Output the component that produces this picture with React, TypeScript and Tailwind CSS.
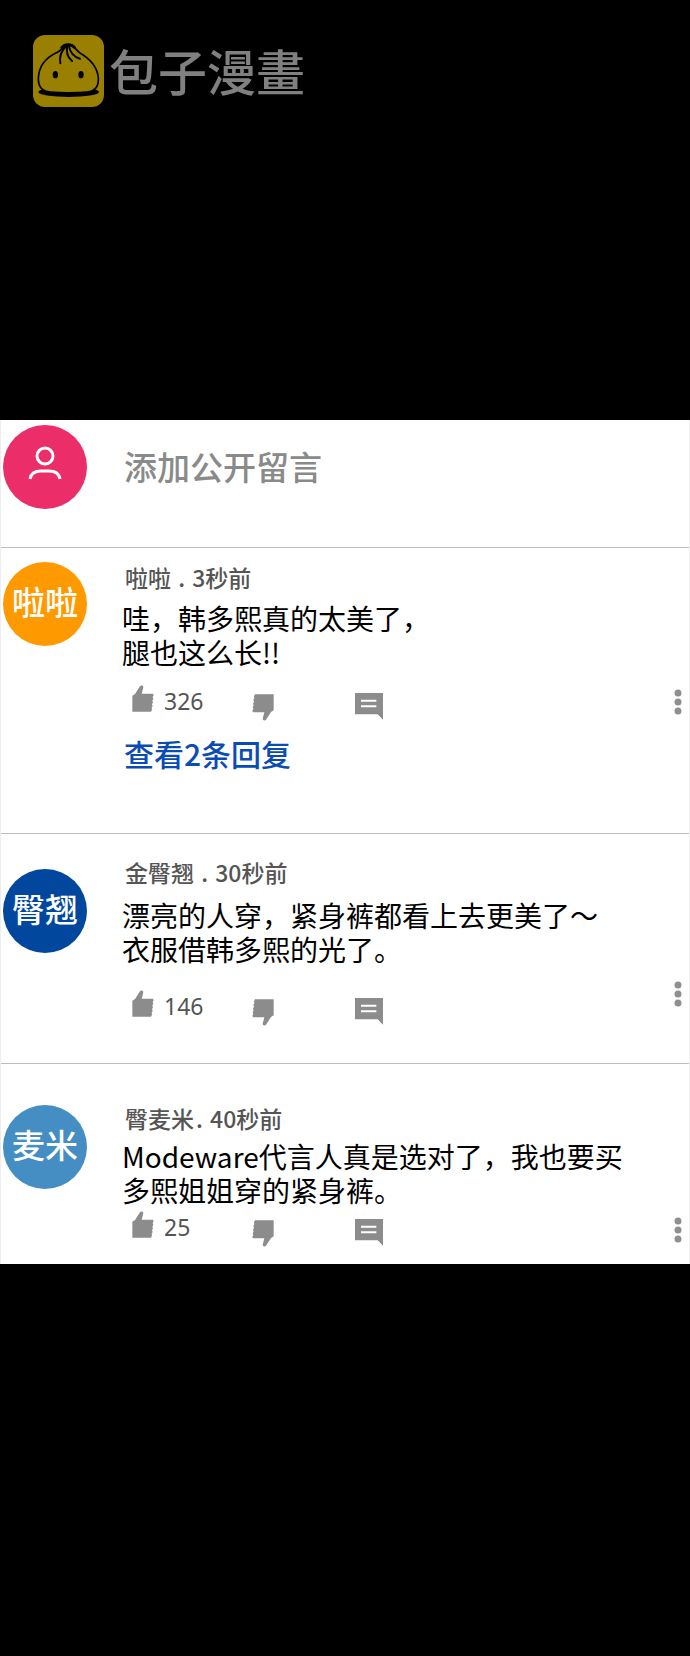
import React from "react";
import clsx from "clsx";

type Comment = {
  id: string;
  initials: string;
  avatar: string;
  name: string;
  separator: string;
  time: string;
  body: string;
  likes: number;
  replies?: string;
  spacing: {
    avatar: string;
    content: string;
    body: string;
    actions: string;
    more: string;
  };
};

const comments: Comment[] = [
  {
    id: "lala",
    initials: "啦啦",
    avatar: "bg-[#ff9900]",
    name: "啦啦",
    separator: " . ",
    time: "3秒前",
    body: "哇，韩多熙真的太美了，\n腿也这么长!!",
    likes: 326,
    replies: "查看2条回复",
    spacing: {
      avatar: "pt-[14px]",
      content: "pt-[15px] pb-[62px]",
      body: "mt-[10px]",
      actions: "mt-[16px]",
      more: "pt-[141px]",
    },
  },
  {
    id: "tunqiao",
    initials: "臀翘",
    avatar: "bg-[#00479d]",
    name: "金臀翘",
    separator: " . ",
    time: "30秒前",
    body: "漂亮的人穿，紧身裤都看上去更美了～\n衣服借韩多熙的光了。",
    likes: 146,
    spacing: {
      avatar: "pt-[35px]",
      content: "pt-[24px] pb-[37px]",
      body: "mt-[12px]",
      actions: "mt-[24px]",
      more: "pt-[147px]",
    },
  },
  {
    id: "maimi",
    initials: "麦米",
    avatar: "bg-[#448ec4]",
    name: "臀麦米",
    separator: ". ",
    time: "40秒前",
    body: "Modeware代言人真是选对了，我也要买\n多熙姐姐穿的紧身裤。",
    likes: 25,
    spacing: {
      avatar: "pt-[41px]",
      content: "pt-[40px] pb-[17px]",
      body: "mt-[7px]",
      actions: "mt-[4px]",
      more: "pt-[153px]",
    },
  },
];

function BaoziLogo() {
  return (
    <svg className="w-[71px] h-[72px] shrink-0" viewBox="0 0 213 216" fill="none" aria-hidden="true">
      <rect width="213" height="216" rx="36" fill="#998000" />
      <ellipse cx="107" cy="171" rx="91" ry="15" fill="#000" />
      <path
        d="M106 29C92 30 88 44 73 52C45 65 17 88 16 131C16 155 27 169 52 171C90 174 124 174 162 171C186 169 197 153 196 130C194 93 168 70 141 54C128 45 124 30 106 29Z"
        fill="#998000"
        stroke="#000"
        strokeWidth="5"
      />
      <path
        d="M86 38C96 26 115 26 125 38"
        stroke="#000"
        strokeWidth="8"
        strokeLinecap="round"
      />
      <path
        d="M100 33C86 46 78 64 82 85M103 33C99 51 104 67 117 78M108 33C110 50 122 66 141 71"
        stroke="#000"
        strokeWidth="6"
        strokeLinecap="round"
      />
      <ellipse cx="67" cy="119" rx="8" ry="11" fill="#000" />
      <ellipse cx="144" cy="119" rx="8" ry="11" fill="#000" />
    </svg>
  );
}

function PersonIcon() {
  return (
    <svg className="w-[34px] h-[36px]" viewBox="0 0 34 36" fill="none" stroke="#fff" strokeWidth="3" aria-hidden="true">
      <circle cx="17" cy="10" r="8" />
      <path d="M2 33C3 27 7 25 13 25H21C27 25 31 27 32 33" />
    </svg>
  );
}

function ThumbIcon({ className }: { className?: string }) {
  return (
    <svg className={clsx("w-[22px] h-[27px]", className)} viewBox="0 0 66 81" fill="#8c8c8c" aria-hidden="true">
      <path d="M1 32L9 27L24 4C27 0 34 2 34 7L29 26H63L65 31L62 36L64 41L61 47L63 52L60 58L62 63L59 68L60 74L57 80H1Z" />
    </svg>
  );
}

function ReplyIcon() {
  return (
    <svg className="w-[28px] h-[27px]" viewBox="0 0 84 81" aria-hidden="true">
      <path d="M0 0H84V80L68 64H0Z" fill="#8c8c8c" />
      <path d="M18 23H64M18 40H64" stroke="#fff" strokeWidth="6" />
    </svg>
  );
}

function Avatar({ className, children }: { className: string; children: React.ReactNode }) {
  return (
    <div
      className={clsx(
        "w-[84px] h-[84px] pb-[6px] rounded-full shrink-0 flex items-center justify-center text-white text-[33px] leading-[40px] font-medium",
        className,
      )}
    >
      {children}
    </div>
  );
}

function CommentItem({ comment }: { comment: Comment }) {
  const { spacing } = comment;

  return (
    <article className="flex items-start pl-[2px] border-t border-[#bdbdbd]">
      <div className={spacing.avatar}>
        <Avatar className={comment.avatar}>{comment.initials}</Avatar>
      </div>
      <div className={clsx("flex-1 min-w-0 ml-[35px]", spacing.content)}>
        <p className="pl-[3px] text-[23px] leading-[28px] font-medium text-[#555]">
          {comment.name}
          <span className="mx-[2px] whitespace-pre">{comment.separator}</span>
          {comment.time}
        </p>
        <p className={clsx("text-[28px] leading-[34px] text-black whitespace-pre-line", spacing.body)}>
          {comment.body}
        </p>
        <div className={clsx("flex items-start h-[36px] pl-[10px]", spacing.actions)}>
          <button className="flex items-start w-[120px]" aria-label={`赞 ${comment.likes}`}>
            <ThumbIcon />
            <span className="ml-[10px] pt-[4px] font-['Noto_Sans',sans-serif] text-[23px] leading-[24px] text-[#555]">
              {comment.likes}
            </span>
          </button>
          <button className="w-[103px] pt-[9px]" aria-label="踩">
            <ThumbIcon className="rotate-180" />
          </button>
          <button className="pt-[8px]" aria-label="回复">
            <ReplyIcon />
          </button>
        </div>
        {comment.replies && (
          <a href="#" className="block w-fit mt-[14px] pl-[2px] text-[30px] leading-[36px] font-medium text-[#0b4cb4]">
            {comment.replies}
          </a>
        )}
      </div>
      <button className={clsx("pr-[7px]", spacing.more)} aria-label="更多">
        <svg className="w-[8px] h-[26px]" viewBox="0 0 8 26" fill="#8f8f8f" aria-hidden="true">
          <circle cx="4" cy="4" r="3.5" />
          <circle cx="4" cy="13" r="3.5" />
          <circle cx="4" cy="22" r="3.5" />
        </svg>
      </button>
    </article>
  );
}

export default function App() {
  return (
    <div className="min-h-screen bg-black font-['Noto_Sans_CJK_SC',sans-serif]" lang="zh-CN">
      <header className="flex items-start gap-[5px] pl-[33px] pt-[35px] pb-[313px]">
        <BaoziLogo />
        <h1
          className="font-['Noto_Sans_CJK_TC',sans-serif] text-[49px] leading-[70px] font-medium text-[#808080]"
          lang="zh-TW"
        >
          包子漫畫
        </h1>
      </header>

      <main className="bg-white border-x border-[#eee]">
        <form className="flex items-center pl-[2px] pt-[5px] pb-[38px]">
          <Avatar className="bg-[#eb2d6a]">
            <PersonIcon />
          </Avatar>
          <input
            type="text"
            aria-label="添加公开留言"
            placeholder="添加公开留言"
            className="flex-1 min-w-0 ml-[37px] pb-[2px] text-[33px] leading-[40px] font-medium text-black placeholder:text-[#8a8a8a] outline-none"
          />
        </form>
        {comments.map((comment) => (
          <CommentItem key={comment.id} comment={comment} />
        ))}
      </main>
    </div>
  );
}
